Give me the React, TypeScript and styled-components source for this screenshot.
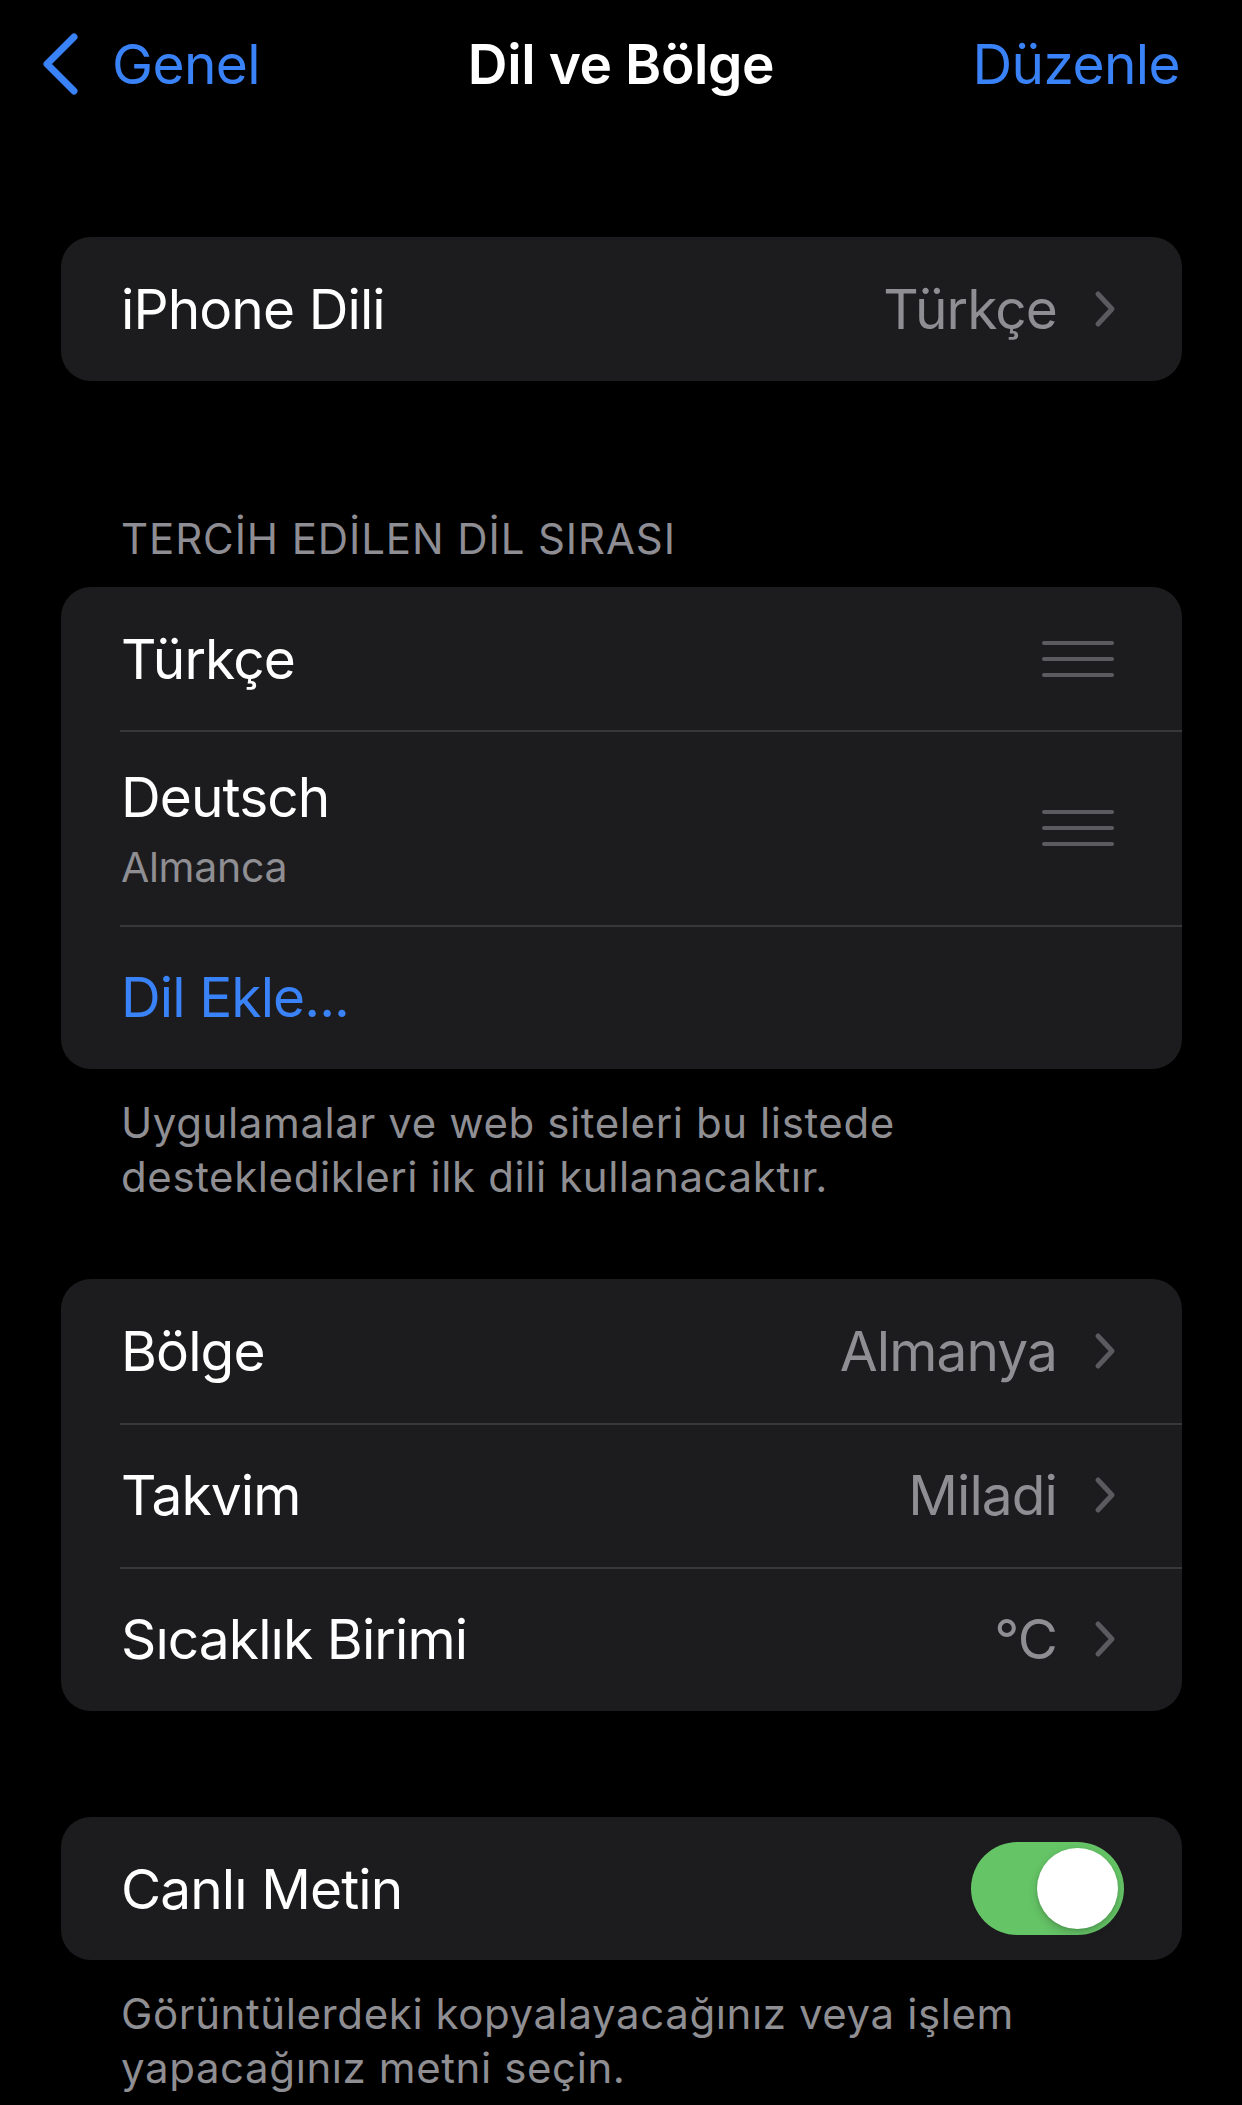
import styled, { createGlobalStyle } from "styled-components";

const GlobalStyle = createGlobalStyle`
    html, body {
        margin: 0;
        padding: 0;
        background: #000;
    }
    body {
        font-family: Inter, "Noto Sans", "Liberation Sans", sans-serif;
        color: #fff;
        -webkit-font-smoothing: antialiased;
    }
`;

const Page = styled.div`
    width: 1242px;
    min-height: 2105px;
    background: #000;
`;

const NavBar = styled.header`
    height: 128px;
    display: grid;
    grid-template-columns: 1fr auto 1fr;
    align-items: center;
    padding: 0 41px;
    font-size: 55px;
    letter-spacing: -0.6px;
`;

const BackButton = styled.div`
    display: flex;
    align-items: center;
    gap: 33px;
    color: #3a82f7;
`;

const Title = styled.h1`
    margin: 0;
    font-size: 55px;
    font-weight: 600;
    letter-spacing: -0.4px;
    color: #fff;
`;

const EditButton = styled.div`
    justify-self: end;
    margin-right: 21px;
    color: #3a82f7;
`;

const Content = styled.main`
    padding: 0 60px 0 61px;
`;

const Card = styled.section<{ $top: number }>`
    margin-top: ${(p) => p.$top}px;
    background: #1c1c1e;
    border-radius: 30px;
    overflow: hidden;
`;

const Row = styled.div<{ $height?: number; $divider?: boolean }>`
    position: relative;
    min-height: ${(p) => p.$height ?? 144}px;
    display: flex;
    align-items: center;
    justify-content: space-between;
    padding: 0 60px;
    box-sizing: border-box;

    &::before {
        content: "";
        display: ${(p) => (p.$divider ? "block" : "none")};
        position: absolute;
        top: 0;
        left: 59px;
        right: 0;
        height: 2px;
        background: #38383a;
    }
`;

const Label = styled.span<{ $blue?: boolean }>`
    font-size: 55px;
    line-height: 68px;
    letter-spacing: -0.9px;
    color: ${(p) => (p.$blue ? "#3a82f7" : "#fff")};
`;

const LabelStack = styled.div`
    display: flex;
    flex-direction: column;
    gap: 11px;
`;

const SubLabel = styled.span`
    font-size: 41px;
    line-height: 50px;
    letter-spacing: -0.3px;
    color: #8e8e93;
`;

const Value = styled.div`
    display: flex;
    align-items: center;
    gap: 36px;
    margin-right: 5px;
`;

const ValueText = styled.span`
    font-size: 55px;
    line-height: 68px;
    letter-spacing: -0.9px;
    color: #8e8e93;
`;

const SectionHeader = styled.h2`
    margin: 134px 0 24px 60px;
    font-size: 42px;
    line-height: 48px;
    font-weight: 400;
    letter-spacing: 0.9px;
    color: #8d8d93;
`;

const Footer = styled.p`
    margin: 27px 40px 0 60px;
    font-size: 42px;
    line-height: 54px;
    letter-spacing: 0.6px;
    color: #8e8e93;
`;

const Handle = styled.div`
    display: flex;
    flex-direction: column;
    gap: 12px;
    margin-right: 8px;

    span {
        display: block;
        width: 72px;
        height: 4px;
        border-radius: 2px;
        background: #5c5c60;
    }
`;

const Toggle = styled.div<{ $on: boolean }>`
    position: relative;
    width: 153px;
    height: 93px;
    border-radius: 47px;
    background: ${(p) => (p.$on ? "#65c466" : "#39393d")};
    margin-right: -2px;

    &::after {
        content: "";
        position: absolute;
        top: 6px;
        left: ${(p) => (p.$on ? "66px" : "6px")};
        width: 81px;
        height: 81px;
        border-radius: 50%;
        background: #fff;
        box-shadow: 0 4px 10px rgba(0, 0, 0, 0.18), 0 1px 3px rgba(0, 0, 0, 0.12);
    }
`;

const Chevron = () => (
    <svg width="24" height="40" viewBox="0 0 24 40" fill="none">
        <path d="M5 5 L19 20 L5 35" stroke="#5a5a5f" strokeWidth="5" strokeLinecap="round" strokeLinejoin="round" />
    </svg>
);

const BackChevron = () => (
    <svg width="38" height="62" viewBox="0 0 38 62" fill="none">
        <path d="M33 4 L6 31 L33 58" stroke="#3a82f7" strokeWidth="7" strokeLinecap="round" strokeLinejoin="round" />
    </svg>
);

const DragHandle = () => (
    <Handle>
        <span />
        <span />
        <span />
    </Handle>
);

const NavRow = ({ label, value, divider }: { label: string; value: string; divider?: boolean }) => (
    <Row $divider={divider}>
        <Label>{label}</Label>
        <Value>
            <ValueText>{value}</ValueText>
            <Chevron />
        </Value>
    </Row>
);

const App = () => {
    return (
        <Page>
            <GlobalStyle />
            <NavBar>
                <BackButton>
                    <BackChevron />
                    <span>Genel</span>
                </BackButton>
                <Title>Dil ve Bölge</Title>
                <EditButton>Düzenle</EditButton>
            </NavBar>

            <Content>
                <Card $top={109}>
                    <NavRow label="iPhone Dili" value="Türkçe" />
                </Card>

                <SectionHeader>TERCİH EDİLEN DİL SIRASI</SectionHeader>
                <Card $top={0}>
                    <Row $height={143}>
                        <Label>Türkçe</Label>
                        <DragHandle />
                    </Row>
                    <Row $height={195} $divider>
                        <LabelStack>
                            <Label>Deutsch</Label>
                            <SubLabel>Almanca</SubLabel>
                        </LabelStack>
                        <DragHandle />
                    </Row>
                    <Row $height={144} $divider>
                        <Label $blue>Dil Ekle...</Label>
                    </Row>
                </Card>
                <Footer>
                    Uygulamalar ve web siteleri bu listede destekledikleri ilk dili kullanacaktır.
                </Footer>

                <Card $top={75}>
                    <NavRow label="Bölge" value="Almanya" />
                    <NavRow label="Takvim" value="Miladi" divider />
                    <NavRow label="Sıcaklık Birimi" value="°C" divider />
                </Card>

                <Card $top={106}>
                    <Row $height={143}>
                        <Label>Canlı Metin</Label>
                        <Toggle $on />
                    </Row>
                </Card>
                <Footer>
                    Görüntülerdeki kopyalayacağınız veya işlem yapacağınız metni seçin.
                </Footer>
            </Content>
        </Page>
    );
};

export default App;
